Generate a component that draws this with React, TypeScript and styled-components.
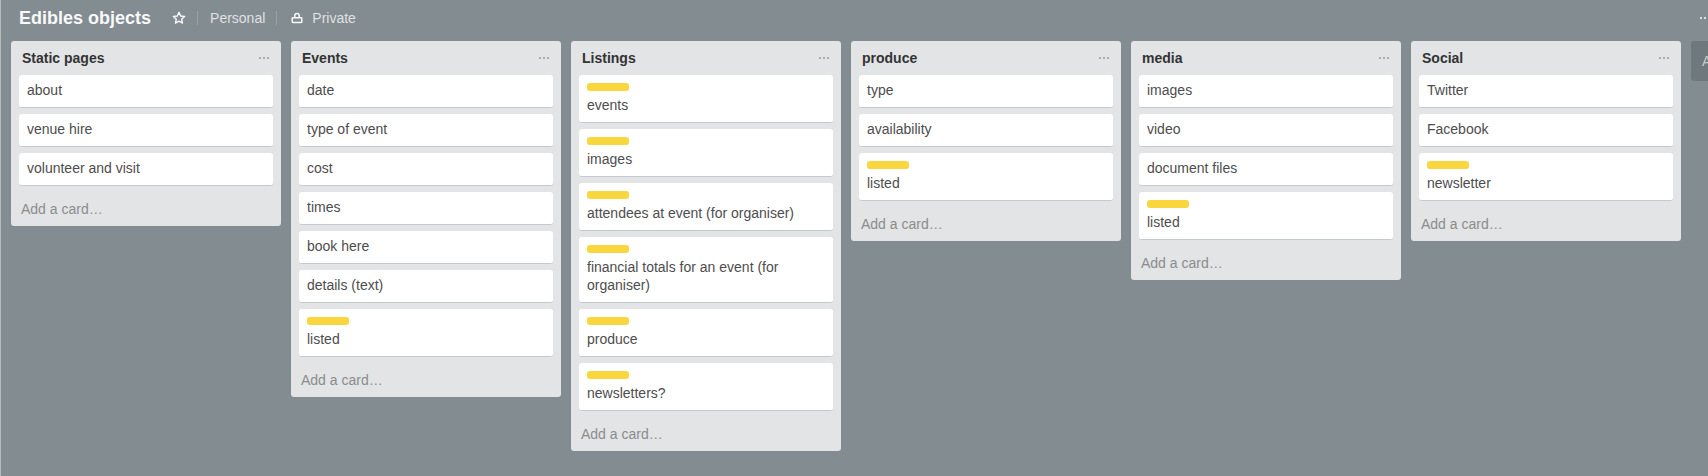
import { createGlobalStyle, styled } from 'styled-components';

const GlobalStyle = createGlobalStyle`
  html, body {
    margin: 0;
    height: 100%;
    overflow: hidden;
    background: #838c91;
  }
  body {
    font-family: "Liberation Sans", Arial, sans-serif;
    font-size: 14px;
    line-height: 18px;
  }
`;

const Board = styled.div`
  width: 1708px;
  height: 476px;
  box-sizing: border-box;
  border-left: 1px solid #b5bbbe;
  background: #838c91;
  overflow: hidden;
  display: flex;
  flex-direction: column;
`;

const Header = styled.div`
  display: flex;
  align-items: center;
  height: 41px;
  flex-shrink: 0;
  padding: 0 0 5px 18px;
  box-sizing: border-box;
  color: #fff;
  opacity: 0.95;
`;

const BoardTitle = styled.h1`
  margin: 0 21px 0 0;
  font-size: 18px;
  line-height: 24px;
  font-weight: 700;
`;

const HeaderItem = styled.span`
  display: flex;
  align-items: center;
  gap: 9px;
  height: 14px;
  padding: 0 11px 0 12px;
  color: #e4e6e8;
  border-left: 1px solid #9aa2a6;
`;

const PrivateItem = styled(HeaderItem)`
  padding-left: 14px;
`;

const StarSlot = styled.span`
  display: flex;
  margin-right: 11px;
`;

const HeaderDots = styled.span`
  display: flex;
  gap: 2px;
  margin-left: auto;
  margin-right: -2px;
`;

const Dot = styled.i<{ $color: string }>`
  display: block;
  width: 2px;
  height: 2px;
  border-radius: 50%;
  background: ${(p) => p.$color};
`;

const Lists = styled.div`
  display: flex;
  align-items: flex-start;
  gap: 10px;
  padding-left: 10px;
`;

const List = styled.section`
  width: 270px;
  flex-shrink: 0;
  box-sizing: border-box;
  padding: 0 8px;
  background: #e2e4e6;
  border-radius: 3px;
`;

const ListHeader = styled.div`
  display: flex;
  align-items: center;
  justify-content: space-between;
  height: 34px;
  padding: 0 4px 0 3px;
`;

const ListTitle = styled.h2`
  margin: 0;
  font-size: 14px;
  line-height: 18px;
  font-weight: 700;
  color: #333;
`;

const ListDots = styled.span`
  display: flex;
  gap: 2px;
`;

const Card = styled.div`
  background: #fff;
  border-radius: 3px;
  border-bottom: 1px solid #c4c9cc;
  padding: 6px 8px 8px;
  margin-bottom: 6px;
  color: #4d4d4d;
`;

const CardLabel = styled.div`
  width: 42px;
  height: 8px;
  margin: 2px 0 5px;
  border-radius: 3px;
  background: #f9d63e;
`;

const AddCard = styled.div`
  padding: 8px 2px;
  height: 34px;
  box-sizing: border-box;
  color: #8c8c8c;
`;

const AddList = styled.div`
  width: 60px;
  height: 40px;
  flex-shrink: 0;
  box-sizing: border-box;
  padding: 11px;
  border-radius: 3px;
  background: #6f787d;
  color: #c5cacc;
  white-space: nowrap;
`;

const Dots = ({ color }: { color: string }) => (
  <>
    <Dot $color={color} />
    <Dot $color={color} />
    <Dot $color={color} />
  </>
);

const Star = () => (
  <svg width="14" height="14" viewBox="0 0 14 14" fill="none" stroke="#fff" strokeWidth="1.4">
    <path d="M7 1.4l1.7 3.6 3.9.5-2.9 2.7.8 3.9L7 10.2l-3.5 1.9.8-3.9-2.9-2.7 3.9-.5z" strokeLinejoin="round" />
  </svg>
);

const Lock = () => (
  <svg width="12" height="12" viewBox="0 0 12 12" fill="none" stroke="#fff" strokeWidth="1.5">
    <rect x="1.2" y="5.8" width="9.6" height="4.6" rx="0.6" />
    <path d="M3.8 5.5V3.6a2.2 2.2 0 0 1 4.4 0v1.9" />
  </svg>
);

type CardData = { text: string; label?: boolean };

const l = (text: string): CardData => ({ text, label: true });
const c = (text: string): CardData => ({ text });

const boardLists: { title: string; cards: CardData[] }[] = [
  { title: 'Static pages', cards: [c('about'), c('venue hire'), c('volunteer and visit')] },
  {
    title: 'Events',
    cards: [c('date'), c('type of event'), c('cost'), c('times'), c('book here'), c('details (text)'), l('listed')],
  },
  {
    title: 'Listings',
    cards: [
      l('events'),
      l('images'),
      l('attendees at event (for organiser)'),
      l('financial totals for an event (for organiser)'),
      l('produce'),
      l('newsletters?'),
    ],
  },
  { title: 'produce', cards: [c('type'), c('availability'), l('listed')] },
  { title: 'media', cards: [c('images'), c('video'), c('document files'), l('listed')] },
  { title: 'Social', cards: [c('Twitter'), c('Facebook'), l('newsletter')] },
];

export default function App() {
  return (
    <Board>
      <GlobalStyle />
      <Header>
        <BoardTitle>Edibles objects</BoardTitle>
        <StarSlot>
          <Star />
        </StarSlot>
        <HeaderItem>Personal</HeaderItem>
        <PrivateItem>
          <Lock />
          Private
        </PrivateItem>
        <HeaderDots>
          <Dots color="#fff" />
        </HeaderDots>
      </Header>
      <Lists>
        {boardLists.map((list) => (
          <List key={list.title}>
            <ListHeader>
              <ListTitle>{list.title}</ListTitle>
              <ListDots>
                <Dots color="#999" />
              </ListDots>
            </ListHeader>
            {list.cards.map((card) => (
              <Card key={card.text}>
                {card.label && <CardLabel />}
                {card.text}
              </Card>
            ))}
            <AddCard>Add a card…</AddCard>
          </List>
        ))}
        <AddList>Add a list…</AddList>
      </Lists>
    </Board>
  );
}
